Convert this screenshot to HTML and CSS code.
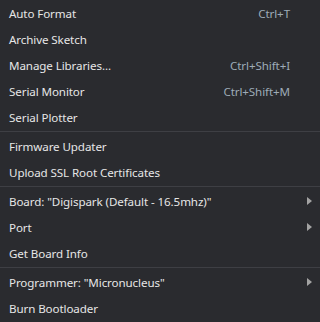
FILE: index.html
```html
<!DOCTYPE html>
<html lang="en">

<head>
    <meta charset="utf-8">
    <title>Tools menu</title>
    <link rel="stylesheet" href="styles.css">
</head>

<body>
    <ul class="menu">
        <li class="item"><span class="label">Auto Format</span><span class="keys">Ctrl+T</span></li>
        <li class="item"><span class="label">Archive Sketch</span></li>
        <li class="item"><span class="label">Manage Libraries...</span><span class="keys">Ctrl+Shift+I</span></li>
        <li class="item"><span class="label">Serial Monitor</span><span class="keys">Ctrl+Shift+M</span></li>
        <li class="item"><span class="label">Serial Plotter</span></li>
        <li class="sep"></li>
        <li class="item"><span class="label">Firmware Updater</span></li>
        <li class="item"><span class="label">Upload SSL Root Certificates</span></li>
        <li class="sep"></li>
        <li class="item sub"><span class="label">Board: "Digispark (Default - 16.5mhz)"</span></li>
        <li class="item sub"><span class="label">Port</span></li>
        <li class="item"><span class="label">Get Board Info</span></li>
        <li class="sep"></li>
        <li class="item sub"><span class="label">Programmer: "Micronucleus"</span></li>
        <li class="item"><span class="label">Burn Bootloader</span></li>
    </ul>
</body>

</html>
```

FILE: styles.css
```css
* {
    box-sizing: border-box;
}

body {
    margin: 0;
    background-color: #2a2b2f;
    font-family: "Noto Sans", sans-serif;
    font-size: 11.6px;
    letter-spacing: -0.1px;
}

.menu {
    list-style: none;
    margin: 0;
    padding: 0;
    width: 320px;
}

.item {
    position: relative;
    display: flex;
    align-items: center;
    height: 26px;
    padding: 1px 30px 0 9px;
    color: #e6e6e6;
}

.label {
    flex: 1;
    white-space: nowrap;
}

.keys {
    color: #9eabb8;
}

.sub::after {
    content: "";
    position: absolute;
    right: 8px;
    top: 9px;
    border-left: 5px solid #a3a3a3;
    border-top: 4px solid transparent;
    border-bottom: 4px solid transparent;
}

.sep {
    height: 1px;
    margin: 1px 0;
    background-color: #3e3f44;
}
```
